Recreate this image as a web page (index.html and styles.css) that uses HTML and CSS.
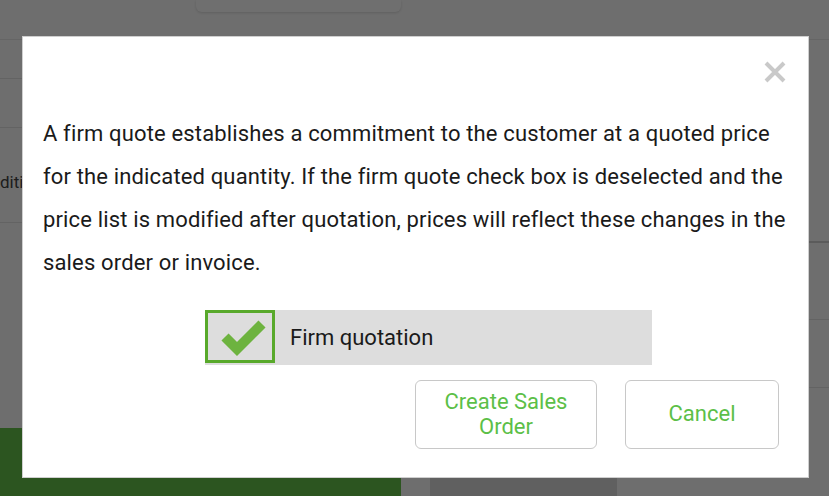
FILE: index.html
```html
<!DOCTYPE html>
<html lang="en">
<head>
  <meta charset="UTF-8" />
  <meta name="viewport" content="width=device-width, initial-scale=1.0" />
  <title>Firm quotation</title>
  <link rel="stylesheet" href="styles.css">
</head>
<body>
  <div class="page">
    <div class="topbar"><div class="tab"></div></div>
    <div class="cols">
      <div class="colLeft">
        <div class="row r1"></div>
        <div class="row r2"></div>
        <div class="row r3"><span class="cut">diti</span></div>
        <div class="spacer"></div>
        <div class="greenBtn"></div>
      </div>
      <div class="colMid"></div>
      <div class="colRight">
        <div class="row r4"></div>
        <div class="row r5"></div>
        <div class="row r6"></div>
        <div class="spacer"></div>
        <div class="foot">
          <div class="footA"></div>
          <div class="footB"></div>
        </div>
      </div>
    </div>
  </div>

  <div class="overlay">
    <div class="modal">
      <div class="modalHead">
        <button class="closeBtn" type="button" title="Close">
          <svg width="22" height="22" viewBox="0 0 22 22"><path d="M2 2 L20 20 M20 2 L2 20" stroke="#c9c9c9" stroke-width="4" fill="none"/></svg>
        </button>
      </div>
      <p class="msg">A firm quote establishes a commitment to the customer at a quoted price for the indicated quantity. If the firm quote check box is deselected and the price list is modified after quotation, prices will reflect these changes in the sales order or invoice.</p>
      <label class="checkRow">
        <span class="checkBox">
          <svg width="64" height="47" viewBox="0 0 64 47"><polyline points="17,24 29,36 54,11" stroke="#6db33f" stroke-width="10" fill="none" stroke-linejoin="miter" stroke-linecap="butt"/></svg>
        </span>
        <span class="checkLabel">Firm quotation</span>
      </label>
      <div class="actions">
        <button class="actBtn createBtn" type="button">Create Sales<br>Order</button>
        <button class="actBtn cancelBtn" type="button">Cancel</button>
      </div>
    </div>
  </div>
</body>
</html>
```

FILE: styles.css
```css
*{box-sizing:border-box;}
html,body{margin:0;height:100%;}
body{font-family:"Roboto","Liberation Sans",sans-serif;background:#fdfdfd;overflow:hidden;}

/* page under the dialog */
.page{height:496px;display:flex;flex-direction:column;}
.topbar{height:40px;border-bottom:1px solid #e8e8e8;}
.tab{margin-left:196px;width:205px;height:12px;background:#fff;border-radius:0 0 6px 6px;box-shadow:0 1px 3px rgba(0,0,0,.15);}
.cols{flex:1;display:flex;}
.colLeft{width:401px;display:flex;flex-direction:column;}
.colMid{width:29px;display:flex;flex-direction:column;justify-content:flex-end;}
.colRight{flex:1;display:flex;flex-direction:column;}
.row{border-bottom:1px solid #e4e4e4;}
.r1{height:39px;}
.r2{height:49px;}
.r3{height:95px;display:flex;align-items:center;padding-top:14px;}
.cut{width:22px;overflow:hidden;white-space:nowrap;font-size:17px;color:#444;}
.greenBtn{height:68px;background:#66c44b;}
.spacer{flex:1;}
.r4{height:203px;border-bottom:2px solid #d2d2d2;}
.r5{height:77px;}
.r6{height:68px;}
.foot{height:19px;display:flex;}
.footA{width:187px;background:#dcdcdc;}
.footB{width:33px;}

/* dialog */
.overlay{position:fixed;inset:0;background:rgba(0,0,0,.565);}
.modal{position:absolute;left:22px;top:36px;width:787px;height:442px;background:#fff;border:1px solid #cfcfcf;padding:0 22px 0 20px;}
.modalHead{height:75px;display:flex;justify-content:flex-end;align-items:flex-start;}
.closeBtn{border:none;background:none;padding:0;margin:24px 0 0 0;cursor:pointer;line-height:0;}
.msg{margin:0;font-size:22px;line-height:43px;letter-spacing:.15px;color:#1a1a1a;}
.checkRow{display:flex;align-items:center;width:447px;height:55px;margin:26px 0 0 162px;background:#dddddd;cursor:pointer;}
.checkBox{width:70px;height:53px;align-self:flex-start;border:3px solid #58a92b;display:flex;align-items:center;justify-content:center;}
.checkLabel{margin-left:15px;font-size:22px;color:#1a1a1a;}
.actions{display:flex;justify-content:flex-end;gap:28px;margin-top:15px;padding-right:7px;}
.actBtn{height:69px;background:#fff;border:1px solid #c8c8c8;border-radius:6px;color:#5cbf48;font-family:inherit;font-size:22px;line-height:25px;cursor:pointer;padding:0 0 2px;}
.createBtn{width:182px;}
.cancelBtn{width:154px;}
```
